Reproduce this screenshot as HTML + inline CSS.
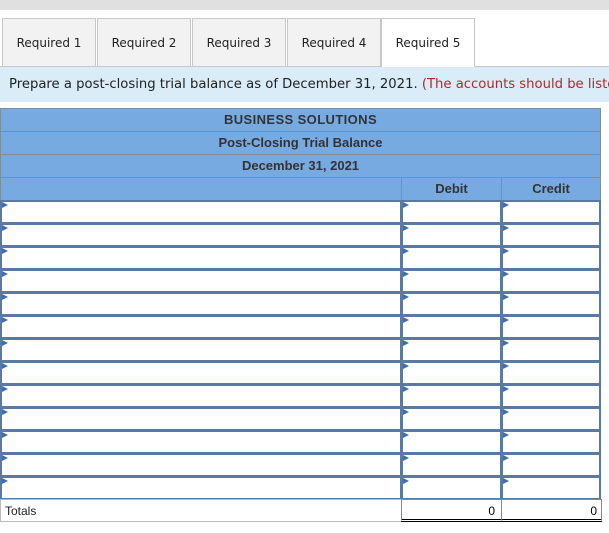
<!DOCTYPE html>
<html><head><style>
body{margin:0;width:609px;height:533px;background:#fff;font-family:"Liberation Sans",sans-serif;position:relative;overflow:hidden}
.a{position:absolute;box-sizing:border-box}
.tab{position:absolute;top:18px;height:48px;width:94px;background:#f2f2f2;border:1px solid #c8c8c8;border-bottom:none;font-family:"DejaVu Sans",sans-serif;font-size:12px;line-height:48px;text-align:center;color:#222;box-sizing:border-box}
.h{position:absolute;left:0;width:601px;height:24px;background:#78aae2;border:1px solid #7d8e9f;box-sizing:border-box;text-align:center;font-size:13px;font-weight:bold;color:#333;line-height:22px}
.c{position:absolute;height:24px;background:#fff;border:2px solid #5a7aa3;box-sizing:border-box}
.c:before{content:"";position:absolute;left:0;top:0;border-left:6px solid #3d6fb0;border-top:3px solid transparent;border-bottom:3px solid transparent}
</style></head><body>
<div class="a" style="left:0;top:0;width:609px;height:10px;background:#e0e0e0"></div>
<div class="tab" style="left:2px">Required 1</div>
<div class="tab" style="left:97px">Required 2</div>
<div class="tab" style="left:192px">Required 3</div>
<div class="tab" style="left:287px">Required 4</div>
<div class="tab" style="left:381px;background:#fff;height:49px;z-index:2">Required 5</div>
<div class="a" style="left:0;top:66px;width:609px;height:36px;background:#d9ecf8;border-top:1px solid #c8c8c8;font-family:'DejaVu Sans',sans-serif;font-size:13.2px;line-height:35px;padding-left:9px;white-space:nowrap;color:#222">Prepare a post-closing trial balance as of December 31, 2021. <span style="color:#b02a2a">(The accounts should be listed</span></div>
<div class="h" style="top:108px;letter-spacing:0.4px">BUSINESS SOLUTIONS</div>
<div class="h" style="top:131px">Post-Closing Trial Balance</div>
<div class="h" style="top:154px">December 31, 2021</div>
<div class="h" style="top:177px;width:402px"></div>
<div class="h" style="top:177px;left:401px;width:101px">Debit</div>
<div class="h" style="top:177px;left:501px;width:100px">Credit</div>
<div id="rows"></div>
<script>
var s="";for(var i=0;i<13;i++){var t=200+23*i;
s+='<div class="c" style="top:'+t+'px;left:0;width:402px"></div><div class="c" style="top:'+t+'px;left:401px;width:101px"></div><div class="c" style="top:'+t+'px;left:501px;width:100px"></div>';}
document.getElementById('rows').innerHTML=s;
</script>
<div class="a" style="left:0;top:499px;width:602px;height:23px;border:1px solid #bbb;font-size:12px;line-height:22px;padding-left:4px;color:#222">Totals</div>
<div class="a" style="left:401px;top:499px;width:101px;height:23px;border:1px solid #888;border-bottom:3px double #000;font-size:12px;text-align:right;padding-right:6px;line-height:22px;background:#fff">0</div>
<div class="a" style="left:501px;top:499px;width:101px;height:23px;border:1px solid #888;border-bottom:3px double #000;font-size:12px;text-align:right;padding-right:4px;line-height:22px;background:#fff">0</div>
</body></html>
